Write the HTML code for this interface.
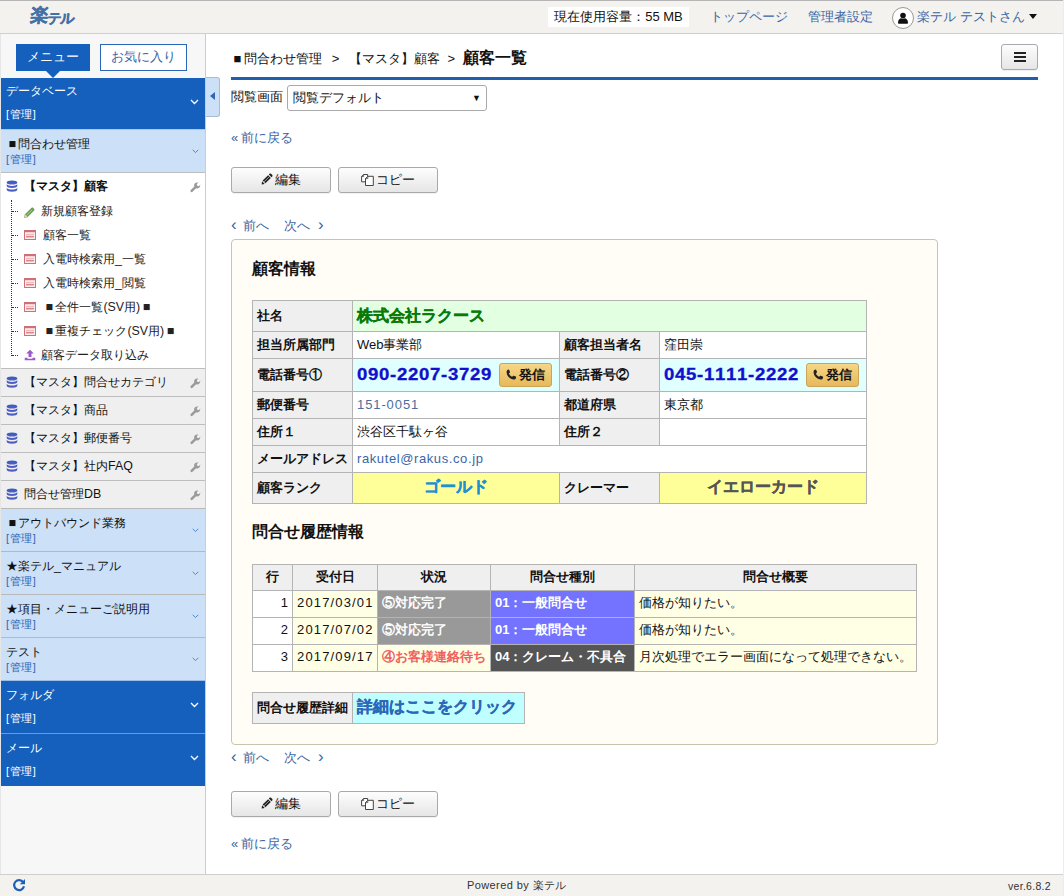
<!DOCTYPE html>
<html lang="ja">
<head>
<meta charset="utf-8">
<title>楽テル</title>
<style>
*{box-sizing:border-box;margin:0;padding:0}
html,body{width:1064px;height:896px;overflow:hidden;background:#fff}
body{font-family:"Liberation Sans",sans-serif;font-size:13px;line-height:1.15;color:#111;position:relative}
a{color:#3b65a5;text-decoration:none}
.abs{position:absolute}
.sq{display:inline-block;width:1em;text-align:center;font-style:normal}
.lq{display:inline-block;width:10px;font-style:normal}
.ls{letter-spacing:1.15px}
/* header */
#hdr{position:absolute;left:0;top:0;width:1064px;height:34px;background:#f3f2ee;border-top:1px solid #b5b5b5;border-bottom:1px solid #cfcfcf}
#logo{position:absolute;left:31px;top:4px;font-size:18px;font-weight:bold;color:#4472a8;letter-spacing:-1px;-webkit-text-stroke:.5px #4472a8;transform:skewX(-6deg);white-space:nowrap}
#logo small{font-size:14px;position:relative;top:2px}
#cap{position:absolute;left:548px;top:6px;width:141px;height:20px;background:#fff;font-size:13px;line-height:20px;text-align:center;color:#111}
.hl{position:absolute;top:8px;font-size:13px;color:#3b65a5;line-height:16px;white-space:nowrap}
#uicon{position:absolute;left:892px;top:6px;width:22px;height:22px;border-radius:11px;border:1px solid #999;background:#fff}
/* sidebar */
#side{position:absolute;left:0;top:34px;width:206px;height:840px;background:#f7f7f7;border-right:1px solid #ccc;border-left:1px solid #e6e6e6}
#tab1{position:absolute;left:16px;top:44px;width:74px;height:27px;background:#1560bd;color:#fff;text-align:center;line-height:25px;font-size:13px}
#tab1:after{content:"";position:absolute;left:30px;top:27px;border:7px solid transparent;border-top:7px solid #1560bd;border-bottom:none}
#tab2{position:absolute;left:100px;top:44px;width:87px;height:27px;background:#fff;border:1px solid #2a66b5;color:#3b65a5;text-align:center;line-height:23px;font-size:13px}
.cat{position:absolute;left:1px;width:204px;border-top:1px solid #b8b8b8}
.cat.dk{background:#1560bd;color:#fff;border-top-color:#6a9ade}
.cat.lt{background:#cce0f8;color:#111}
.cat .t{position:absolute;left:5px;margin-top:1px;font-size:12.4px;white-space:nowrap}
.cat .m{position:absolute;left:5px;margin-top:1px;letter-spacing:.6px;font-size:11px;white-space:nowrap}
.cat.dk .m{color:#fff}
.cat.lt .m{color:#2f66b3}
.cat svg{position:absolute;left:189px}
.db{position:absolute;left:1px;width:204px;height:28px;background:#efefef;border-top:1px solid #bdbdbd;font-size:12.4px;line-height:27px;white-space:nowrap}
.db.sel{background:#fff;font-weight:bold}
.db .ic{position:absolute;left:5px;top:7px}
.db .wr{position:absolute;left:189px;top:9px}
.db span{position:absolute;left:23px}
.it{position:absolute;left:41px;font-size:12.4px;line-height:16px;white-space:nowrap;color:#222}
.itic{position:absolute;left:23px}
/* main */
.btn{position:absolute;height:26px;border:1px solid #a9a9a9;border-radius:3px;background:linear-gradient(#fdfdfd,#e6e6e6);font-size:13px;line-height:24px;text-align:center;color:#111;box-shadow:0 1px 0 rgba(0,0,0,.05)}
table{border-collapse:collapse;position:absolute;table-layout:fixed}
td,th{border:1px solid #b4b4b4;padding:1px 4px 0;font-size:13px;white-space:nowrap;overflow:hidden;text-align:left;vertical-align:middle}
th{background:#efefef;font-weight:bold}
.call{display:inline-block;width:53px;height:24px;border:1px solid #c9a55a;border-radius:3px;background:linear-gradient(#f7d688,#e7b95a);font-size:13px;font-weight:bold;line-height:22px;text-align:center;color:#111;vertical-align:middle;margin-left:6px;position:relative;top:-.5px}
.tel{font-kerning:none;font-feature-settings:"kern" 0;font-size:16px;font-weight:bold;color:#1010cc;vertical-align:middle;letter-spacing:.6px;display:inline-block;transform:scaleX(1.16);transform-origin:0 50%;margin-right:19.75px;-webkit-text-stroke:.3px #1010cc}
.hist td,.hist th{padding-bottom:2px}
td.y{background:#ffffe6}
td.g{background:#999;color:#fff;font-weight:bold}
td.p{background:#7373ff;color:#fff;font-weight:bold}
td.k{background:#555;color:#fff;font-weight:bold}
#foot{position:absolute;left:0;top:874px;width:1064px;height:22px;background:#f3f2ee;border-top:1px solid #cfcfcf;font-size:11px;color:#333}
</style>
</head>
<body>
<div id="hdr">
  <div id="logo">楽<small>テル</small></div>
  <div id="cap">現在使用容量：55 MB</div>
  <a class="hl" style="left:710px">トップページ</a>
  <a class="hl" style="left:808px">管理者設定</a>
  <div id="uicon"><svg width="20" height="20" viewBox="0 0 20 20" style="position:absolute;left:0;top:0"><circle cx="10" cy="7.600" r="2.800" fill="#111"/><path d="M5 14.800c0-3 1.800-4.600 3.200-4.600.5.400 1.100.6 1.800.6s1.300-.2 1.800-.6c1.400 0 3.200 1.600 3.200 4.600 0 .6-.5 1-1.100 1H6.100c-.6 0-1.100-.4-1.100-1z" fill="#111"/></svg></div>
  <a class="hl" style="left:917px">楽テル テストさん<span style="display:inline-block;margin-left:4px;border:4px solid transparent;border-top:5px solid #111;border-bottom:none;vertical-align:2px"></span></a>
</div>
<div id="side"></div>
<div id="tab1">メニュー</div>
<div id="tab2">お気に入り</div>
<div class="cat dk" style="top:78px;height:51px;border-top-color:#1560bd"><div class="t" style="top:4px">データベース</div><div class="m" style="top:28px">[管理]</div><svg width="9" height="6" viewBox="0 0 9 6" style="top:20px"><path d="M1 1l3.500 3.500L8 1" fill="none" stroke="#fff" stroke-width="1.300"/></svg></div>
<div class="cat lt" style="top:129px;height:43px;border-top-color:#a9c6ec"><div class="t" style="top:6px"><i class="sq">■</i>問合わせ管理</div><div class="m" style="top:22px">[管理]</div><svg width="7" height="5" viewBox="0 0 7 5" style="left:191px;top:19px"><path d="M.7.800l2.800 2.800L6.300.8" fill="none" stroke="#4f86cc" stroke-width="1"/></svg></div>
<div class="abs" style="left:1px;top:172px;width:204px;height:196px;background:#fff"></div><div class="db sel" style="top:172px;height:27px"><svg class="ic" width="12" height="13" viewBox="0 0 12 13"><defs><linearGradient id="dbg" x1="0" y1="0" x2="0" y2="1"><stop offset="0" stop-color="#2862c8"/><stop offset="1" stop-color="#6058be"/></linearGradient></defs><g fill="url(#dbg)"><ellipse cx="6" cy="2.500" rx="5.300" ry="2.100"/><path d="M.7 4.300c1 1.100 2.900 1.600 5.300 1.600s4.300-.5 5.300-1.600v1.800c0 1.100-2.400 2-5.300 2S.7 7.200.7 6.100z"/><path d="M.7 7.900c1 1.100 2.900 1.600 5.300 1.600s4.300-.5 5.300-1.600v1.800c0 1.100-2.400 2-5.300 2s-5.300-.9-5.300-2z"/></g></svg><span>【マスタ】顧客</span><svg class="wr" width="11" height="11" viewBox="0 0 13 13"><path d="M12.300 3.100 10.400 5 8.600 4.400 8 2.600 9.900.7C8.500.2 6.900.5 5.900 1.500 4.900 2.500 4.600 4 5.100 5.300L.9 9.500c-.6.600-.6 1.500 0 2.100s1.500.6 2.100 0l4.200-4.200c1.300.5 2.800.2 3.800-.8s1.300-2.600.8-4z" fill="#9a9a9a"/></svg></div>
<div class="abs" style="left:11px;top:200px;width:0;height:156px;border-left:1px dotted #333"></div>
<div class="abs" style="left:12px;top:211px;width:6px;height:0;border-top:1px dotted #333"></div>
<svg class="itic" style="left:24px;top:207px" width="11" height="11" viewBox="0 0 11 11"><path d="M.4 10.600l.7-3L7.600 1.100c.4-.4 1-.4 1.400 0l.9.900c.4.400.4 1 0 1.400L3.400 9.900z" fill="#6f9f50" stroke="#5a8740" stroke-width=".5"/><path d="M.4 10.600l.7-3 2.300 2.300z" fill="#ecdcae"/><path d="M2.400 8.600l6-6" stroke="#a9d18e" stroke-width=".9"/></svg>
<div class="it" style="left:41px;top:203px">新規顧客登録</div>
<div class="abs" style="left:12px;top:235px;width:6px;height:0;border-top:1px dotted #333"></div>
<svg class="itic" style="left:24px;top:230px" width="12" height="10" viewBox="0 0 12 10"><rect x=".5" y=".5" width="11" height="9" fill="#fdeeee" stroke="#cf6f78"/><rect x="0" y="0" width="12" height="2.200" fill="#cf6f78"/><rect x="2" y="3.800" width="8" height="1" fill="#eeb0b4"/><rect x="2" y="5.800" width="8" height="1.700" fill="#e2868e"/></svg>
<div class="it" style="left:43px;top:227px">顧客一覧</div>
<div class="abs" style="left:12px;top:259px;width:6px;height:0;border-top:1px dotted #333"></div>
<svg class="itic" style="left:24px;top:254px" width="12" height="10" viewBox="0 0 12 10"><rect x=".5" y=".5" width="11" height="9" fill="#fdeeee" stroke="#cf6f78"/><rect x="0" y="0" width="12" height="2.200" fill="#cf6f78"/><rect x="2" y="3.800" width="8" height="1" fill="#eeb0b4"/><rect x="2" y="5.800" width="8" height="1.700" fill="#e2868e"/></svg>
<div class="it" style="left:43px;top:251px">入電時検索用_一覧</div>
<div class="abs" style="left:12px;top:283px;width:6px;height:0;border-top:1px dotted #333"></div>
<svg class="itic" style="left:24px;top:278px" width="12" height="10" viewBox="0 0 12 10"><rect x=".5" y=".5" width="11" height="9" fill="#fdeeee" stroke="#cf6f78"/><rect x="0" y="0" width="12" height="2.200" fill="#cf6f78"/><rect x="2" y="3.800" width="8" height="1" fill="#eeb0b4"/><rect x="2" y="5.800" width="8" height="1.700" fill="#e2868e"/></svg>
<div class="it" style="left:43px;top:275px">入電時検索用_閲覧</div>
<div class="abs" style="left:12px;top:307px;width:6px;height:0;border-top:1px dotted #333"></div>
<svg class="itic" style="left:24px;top:302px" width="12" height="10" viewBox="0 0 12 10"><rect x=".5" y=".5" width="11" height="9" fill="#fdeeee" stroke="#cf6f78"/><rect x="0" y="0" width="12" height="2.200" fill="#cf6f78"/><rect x="2" y="3.800" width="8" height="1" fill="#eeb0b4"/><rect x="2" y="5.800" width="8" height="1.700" fill="#e2868e"/></svg>
<div class="it" style="left:43px;top:299px"><i class="sq">■</i>全件一覧(SV用)<i class="sq">■</i></div>
<div class="abs" style="left:12px;top:331px;width:6px;height:0;border-top:1px dotted #333"></div>
<svg class="itic" style="left:24px;top:326px" width="12" height="10" viewBox="0 0 12 10"><rect x=".5" y=".5" width="11" height="9" fill="#fdeeee" stroke="#cf6f78"/><rect x="0" y="0" width="12" height="2.200" fill="#cf6f78"/><rect x="2" y="3.800" width="8" height="1" fill="#eeb0b4"/><rect x="2" y="5.800" width="8" height="1.700" fill="#e2868e"/></svg>
<div class="it" style="left:43px;top:323px"><i class="sq">■</i>重複チェック(SV用)<i class="sq">■</i></div>
<div class="abs" style="left:12px;top:355px;width:6px;height:0;border-top:1px dotted #333"></div>
<svg class="itic" style="left:24px;top:349px" width="12" height="12" viewBox="0 0 13 13"><path d="M6.500.8 10.600 5H8.100v3.800H4.900V5H2.400z" fill="#9b59c9"/><path d="M.8 9.600h3v.9h5.400v-.9h3v2.700H.8z" fill="#9b59c9"/></svg>
<div class="it" style="left:41px;top:347px">顧客データ取り込み</div>
<div class="db" style="top:368px"><svg class="ic" width="12" height="13" viewBox="0 0 12 13"><defs><linearGradient id="dbg" x1="0" y1="0" x2="0" y2="1"><stop offset="0" stop-color="#2862c8"/><stop offset="1" stop-color="#6058be"/></linearGradient></defs><g fill="url(#dbg)"><ellipse cx="6" cy="2.500" rx="5.300" ry="2.100"/><path d="M.7 4.300c1 1.100 2.900 1.600 5.300 1.600s4.300-.5 5.300-1.600v1.800c0 1.100-2.400 2-5.300 2S.7 7.200.7 6.100z"/><path d="M.7 7.900c1 1.100 2.900 1.600 5.300 1.600s4.300-.5 5.300-1.600v1.800c0 1.100-2.400 2-5.300 2s-5.300-.9-5.300-2z"/></g></svg><span>【マスタ】問合せカテゴリ</span><svg class="wr" width="11" height="11" viewBox="0 0 13 13"><path d="M12.300 3.100 10.400 5 8.600 4.400 8 2.600 9.900.7C8.500.2 6.900.5 5.900 1.500 4.900 2.500 4.600 4 5.100 5.300L.9 9.500c-.6.600-.6 1.500 0 2.100s1.500.6 2.100 0l4.200-4.200c1.300.5 2.800.2 3.800-.8s1.300-2.600.8-4z" fill="#9a9a9a"/></svg></div>
<div class="db" style="top:396px"><svg class="ic" width="12" height="13" viewBox="0 0 12 13"><defs><linearGradient id="dbg" x1="0" y1="0" x2="0" y2="1"><stop offset="0" stop-color="#2862c8"/><stop offset="1" stop-color="#6058be"/></linearGradient></defs><g fill="url(#dbg)"><ellipse cx="6" cy="2.500" rx="5.300" ry="2.100"/><path d="M.7 4.300c1 1.100 2.900 1.600 5.300 1.600s4.300-.5 5.300-1.600v1.800c0 1.100-2.400 2-5.300 2S.7 7.200.7 6.100z"/><path d="M.7 7.900c1 1.100 2.900 1.600 5.300 1.600s4.300-.5 5.300-1.600v1.800c0 1.100-2.400 2-5.300 2s-5.300-.9-5.300-2z"/></g></svg><span>【マスタ】商品</span><svg class="wr" width="11" height="11" viewBox="0 0 13 13"><path d="M12.300 3.100 10.400 5 8.600 4.400 8 2.600 9.900.7C8.500.2 6.900.5 5.900 1.500 4.900 2.500 4.600 4 5.100 5.300L.9 9.500c-.6.600-.6 1.500 0 2.100s1.500.6 2.100 0l4.200-4.200c1.300.5 2.800.2 3.800-.8s1.300-2.600.8-4z" fill="#9a9a9a"/></svg></div>
<div class="db" style="top:424px"><svg class="ic" width="12" height="13" viewBox="0 0 12 13"><defs><linearGradient id="dbg" x1="0" y1="0" x2="0" y2="1"><stop offset="0" stop-color="#2862c8"/><stop offset="1" stop-color="#6058be"/></linearGradient></defs><g fill="url(#dbg)"><ellipse cx="6" cy="2.500" rx="5.300" ry="2.100"/><path d="M.7 4.300c1 1.100 2.900 1.600 5.300 1.600s4.300-.5 5.300-1.600v1.800c0 1.100-2.400 2-5.300 2S.7 7.200.7 6.100z"/><path d="M.7 7.900c1 1.100 2.900 1.600 5.300 1.600s4.300-.5 5.300-1.600v1.800c0 1.100-2.400 2-5.300 2s-5.300-.9-5.300-2z"/></g></svg><span>【マスタ】郵便番号</span><svg class="wr" width="11" height="11" viewBox="0 0 13 13"><path d="M12.300 3.100 10.400 5 8.600 4.400 8 2.600 9.900.7C8.500.2 6.900.5 5.900 1.500 4.900 2.500 4.600 4 5.100 5.300L.9 9.500c-.6.600-.6 1.500 0 2.100s1.500.6 2.100 0l4.200-4.200c1.300.5 2.800.2 3.800-.8s1.300-2.600.8-4z" fill="#9a9a9a"/></svg></div>
<div class="db" style="top:452px"><svg class="ic" width="12" height="13" viewBox="0 0 12 13"><defs><linearGradient id="dbg" x1="0" y1="0" x2="0" y2="1"><stop offset="0" stop-color="#2862c8"/><stop offset="1" stop-color="#6058be"/></linearGradient></defs><g fill="url(#dbg)"><ellipse cx="6" cy="2.500" rx="5.300" ry="2.100"/><path d="M.7 4.300c1 1.100 2.900 1.600 5.300 1.600s4.300-.5 5.300-1.600v1.800c0 1.100-2.400 2-5.300 2S.7 7.200.7 6.100z"/><path d="M.7 7.900c1 1.100 2.900 1.600 5.300 1.600s4.300-.5 5.300-1.600v1.800c0 1.100-2.400 2-5.300 2s-5.300-.9-5.300-2z"/></g></svg><span>【マスタ】社内FAQ</span><svg class="wr" width="11" height="11" viewBox="0 0 13 13"><path d="M12.300 3.100 10.400 5 8.600 4.400 8 2.600 9.900.7C8.500.2 6.900.5 5.900 1.500 4.900 2.500 4.600 4 5.100 5.300L.9 9.500c-.6.600-.6 1.500 0 2.100s1.500.6 2.100 0l4.200-4.200c1.300.5 2.800.2 3.800-.8s1.300-2.600.8-4z" fill="#9a9a9a"/></svg></div>
<div class="db" style="top:480px"><svg class="ic" width="12" height="13" viewBox="0 0 12 13"><defs><linearGradient id="dbg" x1="0" y1="0" x2="0" y2="1"><stop offset="0" stop-color="#2862c8"/><stop offset="1" stop-color="#6058be"/></linearGradient></defs><g fill="url(#dbg)"><ellipse cx="6" cy="2.500" rx="5.300" ry="2.100"/><path d="M.7 4.300c1 1.100 2.900 1.600 5.300 1.600s4.300-.5 5.300-1.600v1.800c0 1.100-2.400 2-5.300 2S.7 7.200.7 6.100z"/><path d="M.7 7.900c1 1.100 2.900 1.600 5.300 1.600s4.300-.5 5.300-1.600v1.800c0 1.100-2.400 2-5.300 2s-5.300-.9-5.300-2z"/></g></svg><span>問合せ管理DB</span><svg class="wr" width="11" height="11" viewBox="0 0 13 13"><path d="M12.300 3.100 10.400 5 8.600 4.400 8 2.600 9.900.7C8.500.2 6.900.5 5.900 1.500 4.900 2.500 4.600 4 5.100 5.300L.9 9.500c-.6.600-.6 1.500 0 2.100s1.500.6 2.100 0l4.200-4.200c1.300.5 2.800.2 3.800-.8s1.300-2.600.8-4z" fill="#9a9a9a"/></svg></div>
<div class="cat lt" style="top:508px;height:43px"><div class="t" style="top:6px"><i class="sq">■</i>アウトバウンド業務</div><div class="m" style="top:22px">[管理]</div><svg width="7" height="5" viewBox="0 0 7 5" style="left:191px;top:19px"><path d="M.7.800l2.800 2.800L6.300.8" fill="none" stroke="#4f86cc" stroke-width="1"/></svg></div>
<div class="cat lt" style="top:551px;height:43px"><div class="t" style="top:6px">★楽テル_マニュアル</div><div class="m" style="top:22px">[管理]</div><svg width="7" height="5" viewBox="0 0 7 5" style="left:191px;top:19px"><path d="M.7.800l2.800 2.800L6.300.8" fill="none" stroke="#4f86cc" stroke-width="1"/></svg></div>
<div class="cat lt" style="top:594px;height:43px"><div class="t" style="top:6px">★項目・メニューご説明用</div><div class="m" style="top:22px">[管理]</div><svg width="7" height="5" viewBox="0 0 7 5" style="left:191px;top:19px"><path d="M.7.800l2.800 2.800L6.300.8" fill="none" stroke="#4f86cc" stroke-width="1"/></svg></div>
<div class="cat lt" style="top:637px;height:43px"><div class="t" style="top:6px">テスト</div><div class="m" style="top:22px">[管理]</div><svg width="7" height="5" viewBox="0 0 7 5" style="left:191px;top:19px"><path d="M.7.800l2.800 2.800L6.300.8" fill="none" stroke="#4f86cc" stroke-width="1"/></svg></div>
<div class="cat dk" style="top:680px;height:53px;border-top-color:#9dbce6"><div class="t" style="top:6px">フォルダ</div><div class="m" style="top:30px">[管理]</div><svg width="9" height="6" viewBox="0 0 9 6" style="top:21px"><path d="M1 1l3.500 3.500L8 1" fill="none" stroke="#fff" stroke-width="1.300"/></svg></div>
<div class="cat dk" style="top:733px;height:53px"><div class="t" style="top:6px">メール</div><div class="m" style="top:30px">[管理]</div><svg width="9" height="6" viewBox="0 0 9 6" style="top:21px"><path d="M1 1l3.500 3.500L8 1" fill="none" stroke="#fff" stroke-width="1.300"/></svg></div>
<div class="abs" style="left:206px;top:77px;width:14px;height:40px;background:#cce0f8;border:1px solid #a9bbd3;border-left:none;border-radius:0 3px 3px 0"><div class="abs" style="left:4px;top:14px;border:4px solid transparent;border-right:5px solid #2f66b3;border-left:none"></div></div>
<svg class="abs" style="left:12px;top:878px;z-index:5" width="14" height="14" viewBox="0 0 14 14"><path d="M11.200 4.200A5 5 0 1 0 12 8.300" fill="none" stroke="#1f5fb8" stroke-width="2.200"/><path d="M13 1v5.200H7.800z" fill="#1f5fb8"/></svg>
<div class="abs" style="left:231px;top:49px;font-size:13px;line-height:18px;white-space:nowrap;color:#111"><i class="sq">■</i>問合わせ管理 <span style="margin:0 6px">&gt;</span> 【マスタ】顧客 <span style="margin:0 4px">&gt;</span> <b style="font-size:16px">顧客一覧</b></div>
<div class="abs" style="left:231px;top:77px;width:807px;height:3px;background:#1f5fae"></div>
<div class="btn" style="left:1001px;top:44px;width:37px;height:26px"><div class="abs" style="left:12px;top:7px;width:12px;height:2px;background:#222;box-shadow:0 4px 0 #222,0 8px 0 #222"></div></div>
<div class="abs" style="left:231px;top:89px;font-size:13px;line-height:16px">閲覧画面</div>
<div class="abs" style="left:287px;top:85px;width:200px;height:26px;border:1px solid #a9a9a9;border-radius:3px;background:#fff;font-size:13px;line-height:24px;padding-left:5px">閲覧デフォルト<span class="abs" style="right:5px;top:0;font-size:9px">▼</span></div>
<a class="abs" style="left:231px;top:130px;font-size:13px;line-height:16px"><i class="lq">«</i>前に戻る</a>
<div class="btn" style="left:231px;top:167px;width:100px"><svg width="12" height="12" viewBox="0 0 12 12" style="vertical-align:-1px;margin-right:2px"><path d="M.6 11.400l.5-3.100 2.600 2.600z" fill="#222"/><path d="M1.700 7.600l5.400-5.400 2.700 2.700-5.400 5.400z" fill="#222"/><path d="M7.800 1.500l.8-.8c.4-.4 1-.4 1.400 0l1.300 1.300c.4.400.4 1 0 1.400l-.8.800z" fill="#222"/><path d="M3 8.900l5-5" stroke="#f0f0f0" stroke-width=".6"/></svg>編集</div>
<div class="btn" style="left:338px;top:167px;width:100px"><svg width="13" height="12" viewBox="0 0 13 12" style="vertical-align:-2px;margin-right:2px"><path d="M.6 2.500 2.600.5h4v7.300H.6z" fill="#fff" stroke="#444" stroke-width="1"/><path d="M2.600.5v2H.6" fill="none" stroke="#444" stroke-width=".8"/><path d="M4.500 4.600 6.800 2.300h5.500v9.200H4.500z" fill="#fff" stroke="#444" stroke-width="1"/><path d="M6.800 2.300v2.300H4.500" fill="none" stroke="#444" stroke-width=".8"/></svg>コピー</div>
<a class="abs" style="left:231px;top:218px;font-size:13px;line-height:16px;white-space:nowrap"><i class="lq" style="width:12px;font-size:17px;line-height:10px">‹</i>前へ<i class="lq" style="width:15px"></i>次へ<i class="lq" style="width:8px"></i><i class="lq" style="width:6px;font-size:17px;line-height:10px">›</i></a>
<div class="abs" style="left:231px;top:239px;width:707px;height:506px;background:#fffdf6;border:1px solid #c9c5ad;border-radius:4px"></div>
<div class="abs" style="left:252px;top:259px;font-size:16px;font-weight:bold;line-height:20px">顧客情報</div>
<table style="left:252px;top:300px;width:614px">
<colgroup><col style="width:100px"><col style="width:207px"><col style="width:100px"><col style="width:207px"></colgroup>
<tr style="height:31px"><th>社名</th><td colspan="3" style="background:#e2ffe2;color:#087a08;font-size:16px;font-weight:bold;-webkit-text-stroke:.3px #087a08">株式会社ラクース</td></tr>
<tr style="height:27px"><th>担当所属部門</th><td style="background:#fff">Web事業部</td><th>顧客担当者名</th><td style="background:#fff">窪田崇</td></tr>
<tr style="height:33px"><th>電話番号①</th><td style="background:#e0ffff"><span class="tel">090-2207-3729</span><span class="call"><svg width="11" height="11" viewBox="0 0 10 10" style="vertical-align:-1px;margin-right:2px"><path d="M2.300.5c.3 0 .5.200.6.400l.7 1.700c.1.300 0 .6-.2.800l-.8.700c.6 1.300 1.700 2.400 3 3l.7-.8c.2-.2.500-.3.800-.2l1.700.700c.3.100.4.300.4.600 0 1.200-1 2.100-2.100 2.100C3.600 9.500.5 6.400.5 2.600.5 1.500 1.400.5 2.300.5z" fill="#222"/></svg>発信</span></td><th>電話番号②</th><td style="background:#e0ffff"><span class="tel">045-1111-2222</span><span class="call"><svg width="11" height="11" viewBox="0 0 10 10" style="vertical-align:-1px;margin-right:2px"><path d="M2.300.5c.3 0 .5.200.6.400l.7 1.700c.1.300 0 .6-.2.800l-.8.700c.6 1.300 1.700 2.400 3 3l.7-.8c.2-.2.500-.3.800-.2l1.700.700c.3.100.4.300.4.600 0 1.200-1 2.100-2.100 2.100C3.600 9.500.5 6.400.5 2.600.5 1.500 1.400.5 2.300.5z" fill="#222"/></svg>発信</span></td></tr>
<tr style="height:27px"><th>郵便番号</th><td style="background:#fff;color:#4a6ea0;letter-spacing:.9px">151-0051</td><th>都道府県</th><td style="background:#fff">東京都</td></tr>
<tr style="height:27px"><th>住所１</th><td style="background:#fff">渋谷区千駄ヶ谷</td><th>住所２</th><td style="background:#fff"></td></tr>
<tr style="height:27px"><th>メールアドレス</th><td colspan="3" style="background:#fff;color:#3b65a5;letter-spacing:.6px">rakutel@rakus.co.jp</td></tr>
<tr style="height:31px"><th>顧客ランク</th><td style="background:#ffff99;color:#2090d0;font-size:16px;font-weight:bold;text-align:center;padding-bottom:2px;-webkit-text-stroke:.3px">ゴールド</td><th>クレーマー</th><td style="background:#ffff99;color:#555;font-size:16px;font-weight:bold;text-align:center;padding-bottom:2px;-webkit-text-stroke:.3px">イエローカード</td></tr>
</table>
<div class="abs" style="left:252px;top:522px;font-size:16px;font-weight:bold;line-height:20px">問合せ履歴情報</div>
<table class="hist" style="left:252px;top:564px;width:664px">
<colgroup><col style="width:40px"><col style="width:85px"><col style="width:113px"><col style="width:144px"><col style="width:282px"></colgroup>
<tr style="height:26px"><th style="text-align:center">行</th><th style="text-align:center">受付日</th><th style="text-align:center">状況</th><th style="text-align:center">問合せ種別</th><th style="text-align:center">問合せ概要</th></tr>
<tr style="height:27px"><td style="background:#fff;text-align:right">1</td><td class="y ls">2017/03/01</td><td class="g">⑤対応完了</td><td class="p">01：一般問合せ</td><td class="y">価格が知りたい。</td></tr>
<tr style="height:27px"><td style="background:#fff;text-align:right">2</td><td class="y ls">2017/07/02</td><td class="g">⑤対応完了</td><td class="p">01：一般問合せ</td><td class="y">価格が知りたい。</td></tr>
<tr style="height:27px"><td style="background:#fff;text-align:right">3</td><td class="y ls">2017/09/17</td><td class="y" style="color:#f06060;font-weight:bold">④お客様連絡待ち</td><td class="k">04：クレーム・不具合</td><td class="y">月次処理でエラー画面になって処理できない。</td></tr>
</table>
<table style="left:252px;top:692px;width:272px">
<colgroup><col style="width:100px"><col style="width:172px"></colgroup>
<tr style="height:31px"><th>問合せ履歴詳細</th><td style="background:#c0ffff;color:#2a68b8;font-size:16px;font-weight:bold;padding:0 4px 1px;-webkit-text-stroke:.3px">詳細はここをクリック</td></tr></table>
<a class="abs" style="left:231px;top:750px;font-size:13px;line-height:16px;white-space:nowrap"><i class="lq" style="width:12px;font-size:17px;line-height:10px">‹</i>前へ<i class="lq" style="width:15px"></i>次へ<i class="lq" style="width:8px"></i><i class="lq" style="width:6px;font-size:17px;line-height:10px">›</i></a>
<div class="btn" style="left:231px;top:791px;width:100px"><svg width="12" height="12" viewBox="0 0 12 12" style="vertical-align:-1px;margin-right:2px"><path d="M.6 11.400l.5-3.100 2.600 2.600z" fill="#222"/><path d="M1.700 7.600l5.400-5.400 2.700 2.700-5.400 5.400z" fill="#222"/><path d="M7.800 1.500l.8-.8c.4-.4 1-.4 1.400 0l1.300 1.300c.4.400.4 1 0 1.400l-.8.800z" fill="#222"/><path d="M3 8.900l5-5" stroke="#f0f0f0" stroke-width=".6"/></svg>編集</div>
<div class="btn" style="left:338px;top:791px;width:100px"><svg width="13" height="12" viewBox="0 0 13 12" style="vertical-align:-2px;margin-right:2px"><path d="M.6 2.500 2.600.5h4v7.300H.6z" fill="#fff" stroke="#444" stroke-width="1"/><path d="M2.600.5v2H.6" fill="none" stroke="#444" stroke-width=".8"/><path d="M4.500 4.600 6.800 2.300h5.500v9.200H4.500z" fill="#fff" stroke="#444" stroke-width="1"/><path d="M6.800 2.300v2.300H4.500" fill="none" stroke="#444" stroke-width=".8"/></svg>コピー</div>
<a class="abs" style="left:231px;top:836px;font-size:13px;line-height:16px"><i class="lq">«</i>前に戻る</a>
<div class="abs" style="left:1063px;top:0;width:1px;height:896px;background:#ececec;z-index:9"></div>
<div id="foot"><span class="abs" style="left:467px;top:3px;line-height:14px;letter-spacing:.4px;white-space:nowrap">Powered by 楽テル</span><span class="abs" style="left:1008px;top:4px;line-height:14px;font-size:10.5px;letter-spacing:.3px">ver.6.8.2</span></div>
</body>
</html>
